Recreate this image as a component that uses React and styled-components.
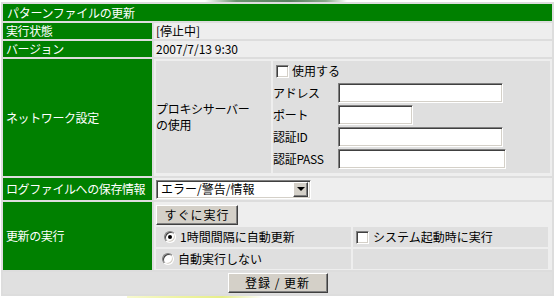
import React from 'react';
import styled, { createGlobalStyle } from 'styled-components';

const GlobalStyle = createGlobalStyle`
  html, body {
    margin: 0;
    padding: 0;
  }

  body {
    min-height: 298px;
    font-family: "Noto Sans CJK JP", "DejaVu Sans", sans-serif;
    font-size: 12px;
    line-height: 14px;
    color: #000000;
    background:
      linear-gradient(90deg, #ffffff 0%, #6b9270 22%, #5a7f62 60%, #8aa88c 85%, #ffffff 100%) no-repeat 205px 0 / 142px 4px,
      linear-gradient(90deg, #f7f9d0 0%, #eef3a0 40%, #e6ee8a 70%, #ffffff 100%) no-repeat 127px 292px / 136px 6px,
      #ffffff;
  }
`;

const Page = styled.div`
  padding: 2px 6px 0 1px;
`;

const Form = styled.div`
  width: 549px;
  display: grid;
  grid-template-columns: 149px 1fr;
  gap: 2px;
  padding: 2px;
  background-color: #dddddd;
`;

const Title = styled.div`
  grid-column: 1 / -1;
  height: 17px;
  display: flex;
  align-items: center;
  padding-left: 4px;
  background-color: #008000;
  color: #ffffff;
  letter-spacing: -0.3px;
`;

const Label = styled.div`
  height: ${(props) => props.$h || 16}px;
  display: flex;
  align-items: center;
  padding-left: 3px;
  background-color: #008000;
  color: #ffffff;
  white-space: nowrap;
  letter-spacing: -0.4px;
`;

const Value = styled.div`
  display: flex;
  flex-direction: column;
  justify-content: center;
  gap: 2px;
  padding: ${(props) => props.$pad || '0 0 0 2px'};
  background-color: #eeeeee;
`;

const ProxyGrid = styled.div`
  display: grid;
  grid-template-columns: 115px 1fr;
  gap: 2px;
`;

const ProxyCaption = styled.div`
  display: flex;
  flex-direction: column;
  justify-content: center;
  background-color: #dfdfdf;
  line-height: 16px;
  letter-spacing: -0.3px;
`;

const ProxyFields = styled.div`
  display: grid;
  grid-template-columns: 65px 1fr;
  grid-auto-rows: 20px;
  align-items: center;
  row-gap: 2px;
  padding: 0 0 4px;
  background-color: #dfdfdf;
`;

const CheckLine = styled.label`
  grid-column: 1 / -1;
  display: flex;
  align-items: center;
  gap: 3px;
  padding-left: 3px;
`;

const FieldLabel = styled.span`
  white-space: nowrap;
  letter-spacing: -0.3px;
`;

const TextBox = styled.input`
  box-sizing: border-box;
  width: ${(props) => props.$w}px;
  height: 20px;
  padding: 0 2px;
  margin: 0;
  background-color: #ffffff;
  border-width: 1px;
  border-style: solid;
  border-color: #808080 #ffffff #ffffff #808080;
  box-shadow: inset 1px 1px 0 #404040, inset -1px -1px 0 #d4d0c8;
  outline: none;
  font: inherit;
`;

const Box = styled.span`
  box-sizing: border-box;
  flex: none;
  width: 13px;
  height: 13px;
  background-color: #ffffff;
  border-width: 1px;
  border-style: solid;
  border-color: #808080 #ffffff #ffffff #808080;
  box-shadow: inset 1px 1px 0 #404040, inset -1px -1px 0 #d4d0c8;
`;

const Radio = styled.span`
  position: relative;
  box-sizing: border-box;
  flex: none;
  width: 12px;
  height: 12px;
  border-radius: 50%;
  background-color: #ffffff;
  border-width: 1px;
  border-style: solid;
  border-color: #808080 #ffffff #ffffff #808080;
  box-shadow: inset 1px 1px 0 #404040, inset -1px -1px 0 #d4d0c8;

  &::after {
    content: '';
    display: ${(props) => (props.$checked ? 'block' : 'none')};
    position: absolute;
    left: 3px;
    top: 3px;
    width: 4px;
    height: 4px;
    border-radius: 50%;
    background-color: #000000;
  }
`;

const Select = styled.div`
  box-sizing: border-box;
  width: 155px;
  height: 19px;
  display: flex;
  align-items: center;
  justify-content: space-between;
  padding: 2px 2px 2px 4px;
  background-color: #ffffff;
  border-width: 1px;
  border-style: solid;
  border-color: #808080 #ffffff #ffffff #808080;
  box-shadow: inset 1px 1px 0 #404040, inset -1px -1px 0 #d4d0c8;
`;

const SelectArrow = styled.span`
  box-sizing: border-box;
  width: 15px;
  height: 15px;
  display: flex;
  align-items: center;
  justify-content: center;
  background-color: #d4d0c8;
  border-width: 1px;
  border-style: solid;
  border-color: #ffffff #404040 #404040 #ffffff;
  box-shadow: inset -1px -1px 0 #808080;

  &::after {
    content: '';
    border-left: 4px solid transparent;
    border-right: 4px solid transparent;
    border-top: 4px solid #000000;
  }
`;

const Button = styled.button`
  box-sizing: border-box;
  width: ${(props) => props.$w}px;
  height: 20px;
  margin: 0;
  padding: 0;
  background-color: #d4d0c8;
  border-width: 1px;
  border-style: solid;
  border-color: #ffffff #404040 #404040 #ffffff;
  box-shadow: inset -1px -1px 0 #808080;
  font: inherit;
  color: #000000;
  letter-spacing: 1px;
`;

const OptionGrid = styled.div`
  display: grid;
  grid-template-columns: 195px 195px;
  grid-auto-rows: 20px;
  gap: 2px;
`;

const OptionCell = styled.label`
  display: flex;
  align-items: center;
  gap: 4px;
  padding-left: ${(props) => props.$indent || 3}px;
  background-color: #dfdfdf;
`;

const Footer = styled.div`
  grid-column: 1 / -1;
  height: 22px;
  display: flex;
  align-items: center;
  justify-content: center;
  background-color: #e0e0e0;
`;

const proxyFields = [
  { label: 'アドレス', width: 165 },
  { label: 'ポート', width: 75 },
  { label: '認証ID', width: 165 },
  { label: '認証PASS', width: 168 },
];

function App() {
  return (
    <Page>
      <GlobalStyle />
      <Form>
        <Title>パターンファイルの更新</Title>

        <Label>実行状態</Label>
        <Value>[停止中]</Value>

        <Label>バージョン</Label>
        <Value>2007/7/13 9:30</Value>

        <Label $h={117}>ネットワーク設定</Label>
        <Value $pad="2px 2px 3px 2px">
          <ProxyGrid>
            <ProxyCaption>
              <span>プロキシサーバー</span>
              <span>の使用</span>
            </ProxyCaption>
            <ProxyFields>
              <CheckLine>
                <Box />
                使用する
              </CheckLine>
              {proxyFields.map((field) => (
                <React.Fragment key={field.label}>
                  <FieldLabel>{field.label}</FieldLabel>
                  <TextBox $w={field.width} type="text" />
                </React.Fragment>
              ))}
            </ProxyFields>
          </ProxyGrid>
        </Value>

        <Label $h={22}>ログファイルへの保存情報</Label>
        <Value>
          <Select>
            エラー/警告/情報
            <SelectArrow />
          </Select>
        </Value>

        <Label $h={68}>更新の実行</Label>
        <Value $pad="3px 2px 1px 2px">
          <Button $w={82} type="button">
            すぐに実行
          </Button>
          <OptionGrid>
            <OptionCell $indent={8}>
              <Radio $checked />
              1時間間隔に自動更新
            </OptionCell>
            <OptionCell>
              <Box />
              システム起動時に実行
            </OptionCell>
            <OptionCell $indent={6}>
              <Radio />
              自動実行しない
            </OptionCell>
            <OptionCell />
          </OptionGrid>
        </Value>

        <Footer>
          <Button $w={100} type="button">
            登録 / 更新
          </Button>
        </Footer>
      </Form>
    </Page>
  );
}

export default App;
